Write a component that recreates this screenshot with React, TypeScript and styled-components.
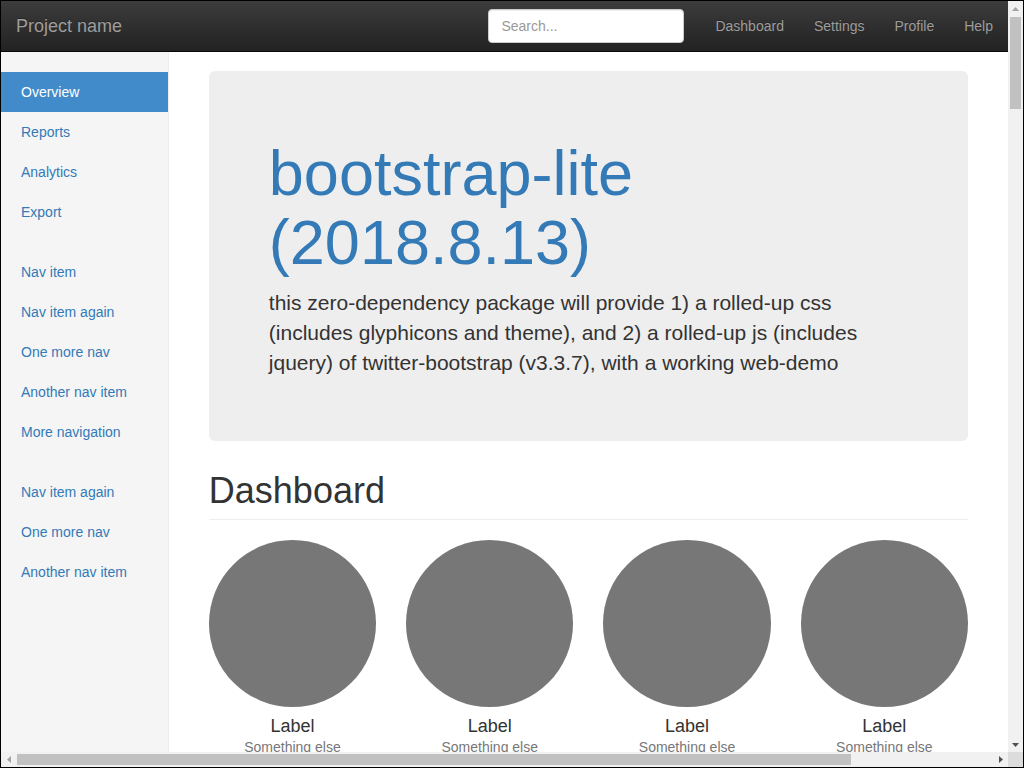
import * as React from 'react';
import styled, { createGlobalStyle } from 'styled-components';

const GlobalStyle = createGlobalStyle`
  html, body {
    margin: 0;
    padding: 0;
    overflow: hidden;
    background: #fff;
  }
  * {
    box-sizing: border-box;
  }
  body {
    font-family: "Liberation Sans", Arial, Helvetica, sans-serif;
    font-size: 14px;
    line-height: 1.42857143;
    color: #333;
  }
`;

// window frame: page viewport + classic scrollbars
const Frame = styled.div`
  width: 1024px;
  height: 768px;
  border: 1px solid #000;
  display: grid;
  grid-template-columns: 1fr 15px;
  grid-template-rows: 1fr 15px;
  background: #fff;
`;

const Viewport = styled.div`
  min-width: 0;
  min-height: 0;
  overflow: hidden;
`;

const ScrollBar = styled.div<{ $vertical?: boolean }>`
  display: flex;
  flex-direction: ${(p) => (p.$vertical ? 'column' : 'row')};
  background: #f1f1f1;
`;

const ScrollButton = styled.div`
  flex: 0 0 15px;
  width: 15px;
  height: 15px;
  display: flex;
  align-items: center;
  justify-content: center;
`;

const Track = styled.div<{ $vertical?: boolean }>`
  flex: 1;
  display: flex;
  flex-direction: ${(p) => (p.$vertical ? 'column' : 'row')};
  padding: ${(p) => (p.$vertical ? '1px 2px 0' : '2px 0 2px 1px')};
`;

const Thumb = styled.div`
  flex: none;
  background: #c1c1c1;
`;

const Corner = styled.div`
  background: #dcdcdc;
`;

const Navbar = styled.nav`
  height: 51px;
  display: flex;
  align-items: center;
  padding: 0 0 0 15px;
  background-image: linear-gradient(to bottom, #3c3c3c 0%, #222 100%);
  border-bottom: 1px solid #080808;
`;

const Brand = styled.a`
  font-size: 18px;
  line-height: 20px;
  color: #9d9d9d;
  text-decoration: none;
  text-shadow: 0 -1px 0 rgba(0, 0, 0, 0.25);
`;

const NavSpacer = styled.div`
  flex: 1;
`;

const SearchInput = styled.input`
  width: 196px;
  height: 34px;
  padding: 6px 12px;
  margin: 0 16px 1px 0;
  font-family: inherit;
  font-size: 14px;
  color: #555;
  background: #fff;
  border: 1px solid #ccc;
  border-radius: 4px;
  box-shadow: inset 0 1px 1px rgba(0, 0, 0, 0.075);
  outline: none;

  &::placeholder {
    color: #999;
  }
`;

const TopLinks = styled.ul`
  display: flex;
  margin: 0;
  padding: 0;
  list-style: none;
`;

const TopLink = styled.a`
  display: block;
  padding: 15px;
  line-height: 20px;
  color: #9d9d9d;
  text-decoration: none;
  text-shadow: 0 -1px 0 rgba(0, 0, 0, 0.25);
`;

const Body = styled.div`
  display: flex;
  align-items: stretch;
`;

const Sidebar = styled.aside`
  flex: 0 0 16.66667%;
  padding: 20px 0;
  background: #f5f5f5;
  border-right: 1px solid #eee;
`;

const SideNav = styled.ul`
  margin: 0 0 20px;
  padding: 0;
  list-style: none;
`;

const SideLink = styled.a<{ $active?: boolean }>`
  display: block;
  padding: 10px 20px;
  line-height: 20px;
  text-decoration: none;
  color: ${(p) => (p.$active ? '#fff' : '#337ab7')};
  background: ${(p) => (p.$active ? '#428bca' : 'transparent')};
`;

const Main = styled.main`
  flex: 1;
  min-width: 0;
  padding: 19px 40px 40px;
`;

const Jumbotron = styled.div`
  padding: 48px 60px;
  margin-bottom: 30px;
  background: #eee;
  border-radius: 6px;
`;

const JumboTitle = styled.h1`
  margin: 20px 0 10px;
  font-size: 63px;
  line-height: 1.1;
  font-weight: 500;

  a {
    color: #337ab7;
    text-decoration: none;
  }
`;

const JumboText = styled.p`
  margin: 0 0 15px;
  font-size: 21px;
  line-height: 1.42857143;
  font-weight: 200;
`;

const PageHeader = styled.h1`
  margin: 0 0 20px;
  padding-bottom: 9px;
  font-size: 36px;
  line-height: 1.1;
  font-weight: 500;
  border-bottom: 1px solid #eee;
`;

const Placeholders = styled.div`
  display: grid;
  grid-template-columns: repeat(4, 1fr);
  margin: 0 -15px 30px;
  text-align: center;
`;

const Placeholder = styled.div`
  padding: 0 15px;
  margin-bottom: 20px;
`;

const Circle = styled.div`
  width: 100%;
  aspect-ratio: 1;
  border-radius: 50%;
  background: #777;
`;

const PlaceLabel = styled.h4`
  margin: 10px 0 0;
  font-size: 18px;
  line-height: 1.1;
  font-weight: 500;
`;

const Muted = styled.span`
  color: #777;
`;

const SubHeader = styled.h2`
  margin: 20px 0;
  padding-bottom: 10px;
  font-size: 30px;
  line-height: 1.1;
  font-weight: 500;
  border-bottom: 1px solid #eee;
`;

const Table = styled.table`
  width: 100%;
  border-collapse: collapse;

  th,
  td {
    padding: 8px;
    line-height: 20px;
    text-align: left;
    border-top: 1px solid #ddd;
  }
  th {
    border-bottom: 2px solid #ddd;
    border-top: 0;
  }
  tbody tr:nth-of-type(odd) {
    background: #f9f9f9;
  }
`;

type Dir = 'up' | 'down' | 'left' | 'right';

const arrowPoints: Record<Dir, string> = {
  up: '0,4 7,4 3.5,0',
  down: '0,0 7,0 3.5,4',
  left: '4,0 4,7 0,3.5',
  right: '0,0 0,7 4,3.5',
};

const Arrow = ({ dir, muted }: { dir: Dir; muted?: boolean }) => {
  const flat = dir === 'up' || dir === 'down';
  return (
    <svg width={flat ? 7 : 4} height={flat ? 4 : 7} viewBox={flat ? '0 0 7 4' : '0 0 4 7'}>
      <polygon points={arrowPoints[dir]} fill={muted ? '#a3a3a3' : '#505050'} />
    </svg>
  );
};

const sideGroups = [
  ['Overview', 'Reports', 'Analytics', 'Export'],
  ['Nav item', 'Nav item again', 'One more nav', 'Another nav item', 'More navigation'],
  ['Nav item again', 'One more nav', 'Another nav item'],
];

const topLinks = ['Dashboard', 'Settings', 'Profile', 'Help'];

const rows = [
  ['1,001', 'Lorem', 'ipsum', 'dolor', 'sit'],
  ['1,002', 'amet', 'consectetur', 'adipiscing', 'elit'],
  ['1,003', 'Integer', 'nec', 'odio', 'Praesent'],
];

export default function App() {
  return (
    <>
      <GlobalStyle />
      <Frame>
        <Viewport>
          <Navbar>
            <Brand href="#">Project name</Brand>
            <NavSpacer />
            <SearchInput type="text" placeholder="Search..." />
            <TopLinks>
              {topLinks.map((l) => (
                <li key={l}>
                  <TopLink href="#">{l}</TopLink>
                </li>
              ))}
            </TopLinks>
          </Navbar>
          <Body>
            <Sidebar>
              {sideGroups.map((group, gi) => (
                <SideNav key={gi}>
                  {group.map((item, ii) => (
                    <li key={item + ii}>
                      <SideLink href="#" $active={gi === 0 && ii === 0}>
                        {item}
                      </SideLink>
                    </li>
                  ))}
                </SideNav>
              ))}
            </Sidebar>
            <Main>
              <Jumbotron>
                <JumboTitle>
                  <a href="#">bootstrap-lite (2018.8.13)</a>
                </JumboTitle>
                <JumboText>
                  this zero-dependency package will provide 1) a rolled-up css (includes glyphicons and theme), and 2)
                  a rolled-up js (includes jquery) of twitter-bootstrap (v3.3.7), with a working web-demo
                </JumboText>
              </Jumbotron>
              <PageHeader>Dashboard</PageHeader>
              <Placeholders>
                {[0, 1, 2, 3].map((n) => (
                  <Placeholder key={n}>
                    <Circle />
                    <PlaceLabel>Label</PlaceLabel>
                    <Muted>Something else</Muted>
                  </Placeholder>
                ))}
              </Placeholders>
              <SubHeader>Section title</SubHeader>
              <Table>
                <thead>
                  <tr>
                    <th>#</th>
                    <th>Header</th>
                    <th>Header</th>
                    <th>Header</th>
                    <th>Header</th>
                  </tr>
                </thead>
                <tbody>
                  {rows.map((r) => (
                    <tr key={r[0]}>
                      {r.map((c, ci) => (
                        <td key={ci}>{c}</td>
                      ))}
                    </tr>
                  ))}
                </tbody>
              </Table>
            </Main>
          </Body>
        </Viewport>
        <ScrollBar $vertical>
          <ScrollButton>
            <Arrow dir="up" muted />
          </ScrollButton>
          <Track $vertical>
            <Thumb style={{ height: 92 }} />
          </Track>
          <ScrollButton>
            <Arrow dir="down" />
          </ScrollButton>
        </ScrollBar>
        <ScrollBar>
          <ScrollButton>
            <Arrow dir="left" muted />
          </ScrollButton>
          <Track>
            <Thumb style={{ width: 834 }} />
          </Track>
          <ScrollButton>
            <Arrow dir="right" />
          </ScrollButton>
        </ScrollBar>
        <Corner />
      </Frame>
    </>
  );
}
